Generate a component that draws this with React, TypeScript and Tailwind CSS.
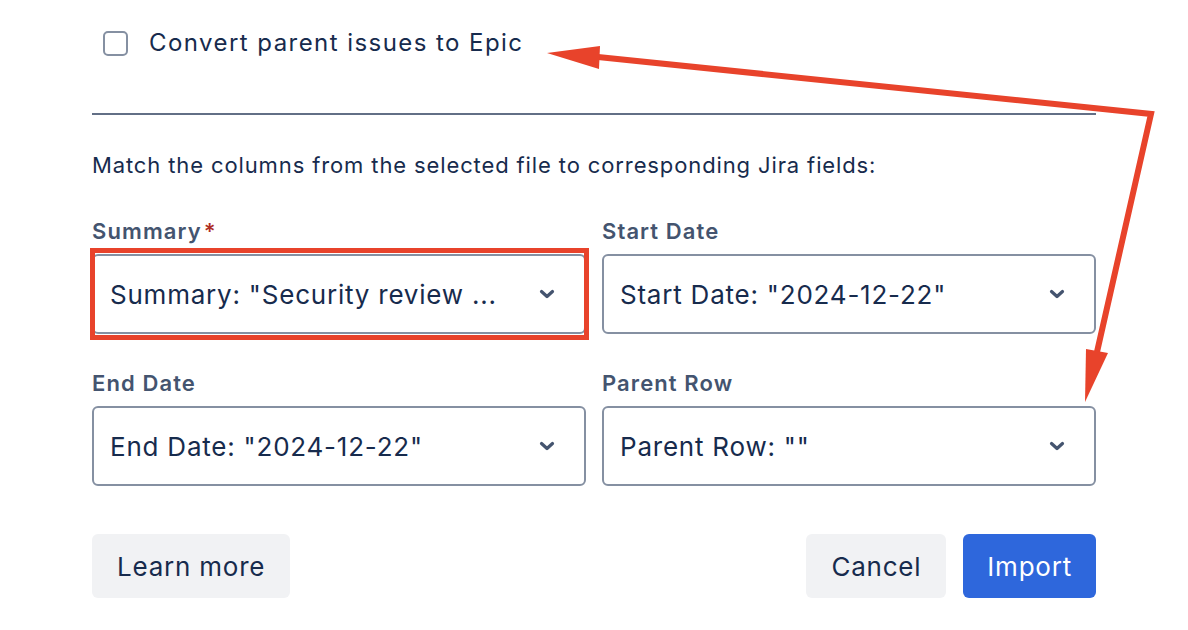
import React from 'react';

const ChevronDown: React.FC = () => (
  <svg width="16" height="10" viewBox="0 0 16 10" fill="none">
    <path d="M2.5 2.5 L8 7.5 L13.5 2.5" stroke="#44546f" strokeWidth="3.2" strokeLinecap="round" strokeLinejoin="round" />
  </svg>
);

type FieldProps = {
  label: string;
  value: string;
  required?: boolean;
  highlighted?: boolean;
};

const Field: React.FC<FieldProps> = ({ label, value, required, highlighted }) => (
  <div className="flex flex-col">
    <div className="h-[28px] mb-[9px] flex items-center text-[22px] tracking-[0.05em] font-semibold text-[#44546f] leading-[28px]">
      {label}
      {required && <span className="ml-[2px] text-[#ae2e24]">*</span>}
    </div>
    <div className="relative">
      <div className="h-[80px] flex items-center justify-between rounded-[6px] border-2 border-[#8590a2] bg-white pl-[16px] pr-[29px]">
        <span className="text-[26px] tracking-[0.03em] text-[#172b4d] truncate">{value}</span>
        <ChevronDown />
      </div>
      {highlighted && (
        <div className="absolute -left-[2px] -right-[3px] -top-[6px] -bottom-[6px] border-[5px] border-[#e8432b] pointer-events-none" />
      )}
    </div>
  </div>
);

export default function App() {
  return (
    <div className="relative w-[1188px] h-[630px] bg-white overflow-hidden font-['Inter',sans-serif]">
      <div className="px-[92px]">
        {/* Checkbox */}
        <div className="mt-[18px] h-[50px] flex items-center pl-[11px]">
          <div className="w-[25px] h-[25px] rounded-[5px] border-2 border-[#8590a2] bg-white" />
          <span className="ml-[21px] text-[24px] tracking-[0.06em] text-[#172b4d]">Convert parent issues to Epic</span>
        </div>

        <div className="mt-[45px] h-[2px] bg-[#626f86]" />

        <p className="mt-[36px] h-[28px] leading-[28px] text-[22px] tracking-[0.04em] text-[#172b4d]">
          Match the columns from the selected file to corresponding Jira fields:
        </p>

        <div className="mt-[38px] grid grid-cols-2 gap-x-[16px] gap-y-[35px]">
          <Field label="Summary" required highlighted value={'Summary: "Security review ...'} />
          <Field label="Start Date" value={'Start Date: "2024-12-22"'} />
          <Field label="End Date" value={'End Date: "2024-12-22"'} />
          <Field label="Parent Row" value={'Parent Row: ""'} />
        </div>

        <div className="mt-[48px] flex items-center justify-between">
          <button className="h-[64px] px-[25px] rounded-[6px] bg-[#f1f2f4] text-[26px] tracking-[0.03em] text-[#172b4d]">
            Learn more
          </button>
          <div className="flex items-center gap-[17px]">
            <button className="h-[64px] px-[25px] rounded-[6px] bg-[#f1f2f4] text-[26px] tracking-[0.03em] text-[#172b4d]">
              Cancel
            </button>
            <button className="h-[64px] px-[24px] rounded-[6px] bg-[#2e67dc] text-[26px] tracking-[0.03em] text-white">
              Import
            </button>
          </div>
        </div>
      </div>

      {/* annotation arrows */}
      <svg className="absolute inset-0 pointer-events-none" width="1188" height="630" viewBox="0 0 1188 630">
        <polyline
          points="598,57 1151,114 1097,352"
          fill="none"
          stroke="#e8432b"
          strokeWidth="6"
          strokeLinejoin="miter"
        />
        <polygon points="547,53 600,46 599,69" fill="#e8432b" />
        <polygon points="1086,349 1108,353 1085,402" fill="#e8432b" />
      </svg>
    </div>
  );
}
